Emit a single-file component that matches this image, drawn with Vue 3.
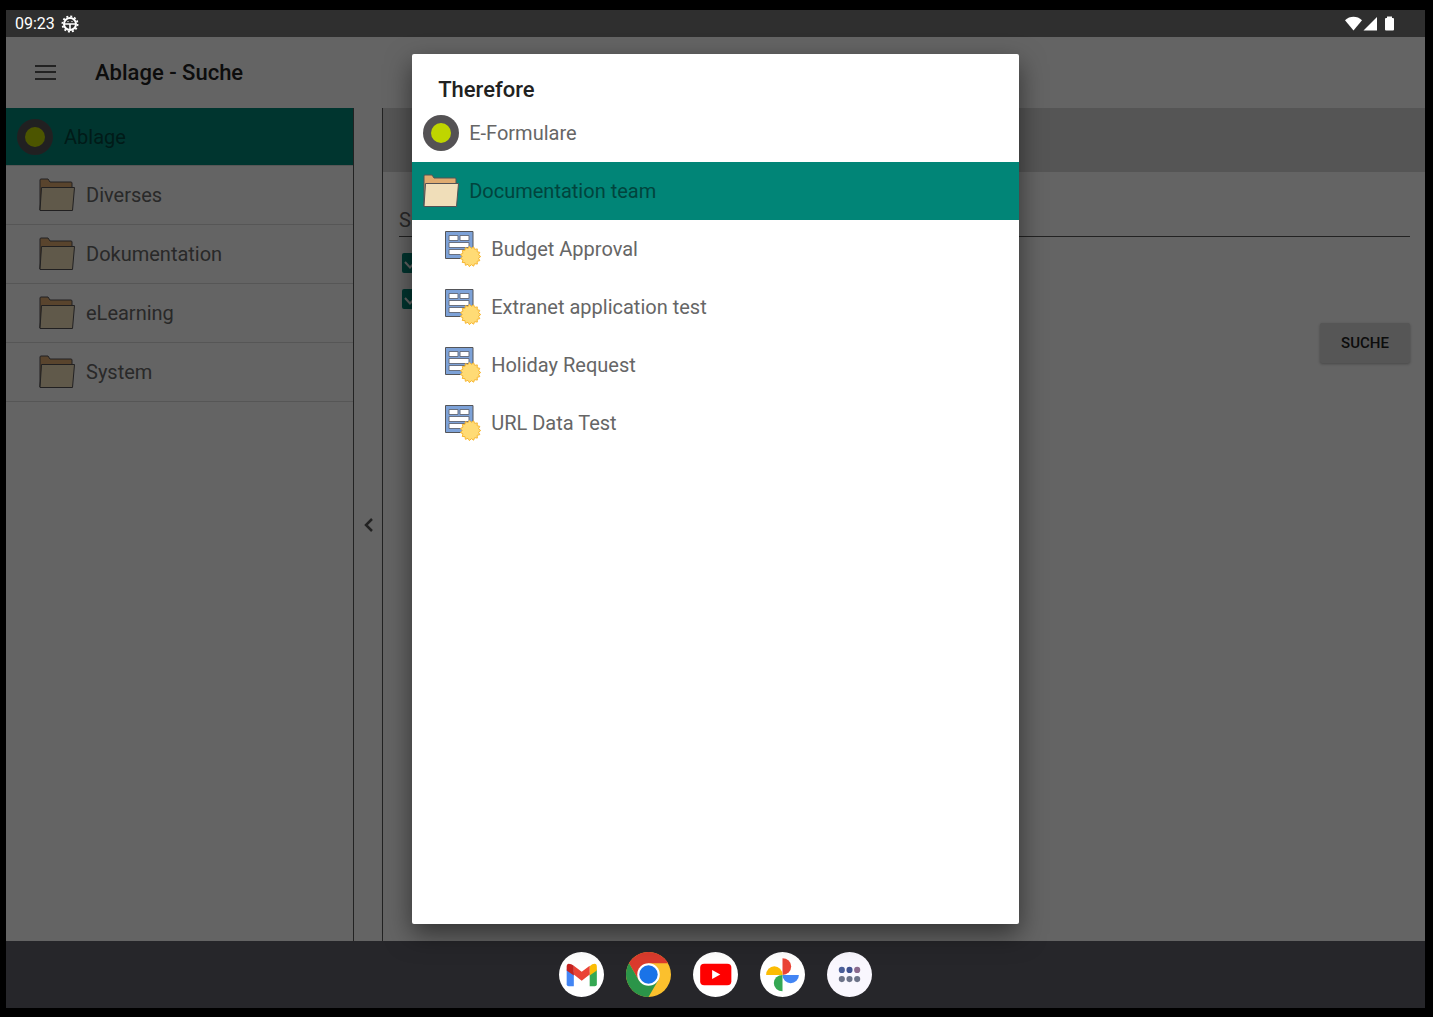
<template>
  <div class="device">
    <header class="status-bar">
      <span class="clock">09:23</span>
      <svg class="debug-icon" viewBox="0 0 18 18" aria-hidden="true">
        <circle cx="9" cy="9" r="7.6" fill="none" stroke="#fff" stroke-width="1.8" stroke-dasharray="2 1.98" />
        <circle cx="9" cy="9" r="6" fill="none" stroke="#fff" stroke-width="2" />
        <path d="M3.5 9h11M9 9v6" fill="none" stroke="#fff" stroke-width="1.6" />
        <path d="M6.4 6.6h1.2M10.4 6.6h1.2" fill="none" stroke="#fff" stroke-width="1" />
      </svg>
      <svg class="signal-icons" viewBox="0 0 50 16" aria-hidden="true">
        <path d="M0 4.2C4.8-.4 12.2-.4 17 4.2L8.5 14.5Z" fill="#fff" />
        <path d="M32 1v13.5H18.5Z" fill="#fff" />
        <path d="M42 .5h5V2h1q1 0 1 1v10.500q0 1-1 1h-7q-1 0-1-1V3q0-1 1-1h1Z" fill="#fff" />
      </svg>
    </header>

    <div class="screen">
      <div class="toolbar">
        <button class="menu-button" type="button" aria-label="Menu">
          <svg viewBox="0 0 22 16"><path d="M0 1h21M0 7h21M0 14h21" stroke="#555" stroke-width="2" /></svg>
        </button>
        <h1>Ablage - Suche</h1>
      </div>

      <div class="panes">
        <nav class="tree">
          <button class="tree-row root" type="button">
            <svg class="root-icon" viewBox="0 0 36 36">
              <circle cx="18" cy="18" r="18" fill="#545254" />
              <circle cx="18" cy="18" r="10" fill="#bfd500" />
            </svg>
            Ablage
          </button>
          <button v-for="folder in folders" :key="folder" class="tree-row" type="button">
            <svg class="folder-icon" viewBox="0 0 36 34">
              <path d="M1 32V2q0-1 1-1h7l2 3h21q1 0 1 1v5H3Z" fill="#dfab70" stroke="#545254" />
              <path d="M2.500 9.500h33L33.500 32.500H1Z" fill="#f0deb9" stroke="#545254" stroke-linejoin="round" />
            </svg>
            {{ folder }}
          </button>
        </nav>

        <button class="collapse" type="button" aria-label="Collapse">
          <svg viewBox="0 0 9 14"><path d="M8 1L2 7l6 6" fill="none" stroke="#555" stroke-width="2.5" /></svg>
        </button>

        <main class="search">
          <div class="search-head"></div>
          <form class="search-form" @submit.prevent>
            <input v-model="query" class="query" type="text" placeholder="Suche" aria-label="Suche">
            <div v-for="(option, i) in options" :key="i" class="option">
              <input v-model="option.checked" type="checkbox" :aria-label="option.label">
              <svg v-if="option.checked" viewBox="0 0 20 20"><path d="M3 9l5 5.5L17 5" fill="none" stroke="#fafafa" stroke-width="2" /></svg>
            </div>
            <button class="submit" type="submit">SUCHE</button>
          </form>
        </main>
      </div>

      <div class="scrim">
        <section class="dialog" role="dialog" aria-labelledby="dialog-title">
          <h2 id="dialog-title">Therefore</h2>
          <button class="dialog-row" type="button">
            <svg class="root-icon" viewBox="0 0 36 36">
              <circle cx="18" cy="18" r="18" fill="#545254" />
              <circle cx="18" cy="18" r="10" fill="#bfd500" />
            </svg>
            E-Formulare
          </button>
          <button class="dialog-row selected" type="button">
            <svg class="folder-icon" viewBox="0 0 36 34">
              <path d="M1 32V2q0-1 1-1h7l2 3h21q1 0 1 1v5H3Z" fill="#dfab70" stroke="#545254" />
              <path d="M2.500 9.500h33L33.500 32.500H1Z" fill="#f0deb9" stroke="#545254" stroke-linejoin="round" />
            </svg>
            Documentation team
          </button>
          <button v-for="form in forms" :key="form" class="dialog-row child" type="button">
            <svg class="form-icon" viewBox="0 0 36 36">
              <path d="M.5 .5h27.500v27H.5Z" fill="#7da2d8" stroke="#545559" />
              <path
                d="M4 4.500h9v5H4ZM15 4.500h9v5h-9ZM4 11.500h20v5H4ZM4 18.500h20v5H4Z"
                fill="#fff"
                stroke="#6a7180"
              />
              <polygon :points="sealPoints" fill="#ffdb75" stroke="#f7b733" />
            </svg>
            {{ form }}
          </button>
        </section>
      </div>
    </div>

    <footer class="dock">
      <button type="button" aria-label="Gmail">
        <svg viewBox="0 0 44 44">
          <circle cx="22" cy="22" r="22" fill="#fff" />
          <path d="M7.5 17v14.500q0 2 2 2h5V20Z" fill="#4285f4" />
          <path d="M37 17v14.500q0 2-2 2h-5V20Z" fill="#34a853" />
          <path d="M30 14l2.500-2q4.500-2 4.500 2.500V18l-7 5Z" fill="#fbbc04" />
          <path d="M14.500 13.500l7.700 5.800 7.800-5.800V22l-7.800 6-7.700-6Z" fill="#ea4335" />
          <path d="M14.500 13.500L12 12q-4.500-2-4.500 2.500V18l7 5Z" fill="#c5221f" />
        </svg>
      </button>
      <button type="button" aria-label="Chrome">
        <svg viewBox="0 0 44 44">
          <circle cx="22" cy="22" r="22" fill="#fbc02d" />
          <path d="M2.950 11A22 22 0 0 1 41.050 11H22L12.500 27.500Z" fill="#db3b2d" />
          <path d="M2.950 11A22 22 0 0 0 22 44l9.500-16.500L12.500 27.500Z" fill="#2b9549" />
          <circle cx="22" cy="22" r="11" fill="#fff" />
          <circle cx="22" cy="22" r="9" fill="#1a73e8" />
        </svg>
      </button>
      <button type="button" aria-label="YouTube">
        <svg viewBox="0 0 44 44">
          <circle cx="22" cy="22" r="22" fill="#fff" />
          <rect x="7" y="11.5" width="30.5" height="21" rx="4" fill="#f00" />
          <path d="M18.700 17.700v8.600l8-4.300Z" fill="#fff" />
        </svg>
      </button>
      <button type="button" aria-label="Photos">
        <svg viewBox="0 0 44 44">
          <circle cx="22" cy="22" r="22" fill="#fff" />
          <path d="M22 6a8.500 8.200 0 0 1 0 16.400Z" fill="#ea4335" />
          <path d="M6 22.400a8 8.500 0 0 1 16 0Z" fill="#fbbc04" />
          <path d="M22 22.400a8 8.200 0 0 0 16 0Z" fill="#4285f4" />
          <path d="M22 22.400a8.500 8 0 0 0 0 16Z" fill="#34a853" />
        </svg>
      </button>
      <button type="button" aria-label="All apps">
        <svg viewBox="0 0 44 44">
          <circle cx="22" cy="22" r="22" fill="#f9f7fe" />
          <circle v-for="dot in appDots" :key="dot.x + '-' + dot.y" :cx="dot.x" :cy="dot.y" r="3" :fill="dot.color" />
        </svg>
      </button>
    </footer>
  </div>
</template>

<script setup>
import { ref } from 'vue'

const query = ref('')
const folders = ['Diverses', 'Dokumentation', 'eLearning', 'System']
const forms = ['Budget Approval', 'Extranet application test', 'Holiday Request', 'URL Data Test']

const options = ref([
  { label: 'Option 1', checked: true },
  { label: 'Option 2', checked: true }
])

const appDots = [
  { x: 14.5, y: 17.5, color: '#4a5e98' },
  { x: 22, y: 17.5, color: '#3f5290' },
  { x: 29.5, y: 17.5, color: '#8b6a8d' },
  { x: 14.5, y: 26.5, color: '#6b7287' },
  { x: 22, y: 26.5, color: '#6b7287' },
  { x: 29.5, y: 26.5, color: '#6b7287' }
]

// jagged seal in the corner of the form icon
const teeth = 15
const sealPoints = Array.from({ length: teeth * 2 }, (_, i) => {
  const radius = i % 2 ? 8.2 : 10.2
  const angle = (Math.PI * i) / teeth
  return `${(25.5 + radius * Math.cos(angle)).toFixed(2)},${(25.5 + radius * Math.sin(angle)).toFixed(2)}`
}).join(' ')
</script>

<style>
body {
  margin: 0;
  background: #000;
}
</style>

<style scoped>
.device {
  box-sizing: border-box;
  min-height: 100vh;
  padding: 10px 8px 9px 6px;
  display: flex;
  flex-direction: column;
  background: #000;
  font-family: Roboto, sans-serif;
}

button {
  border: 0;
  padding: 0;
  background: none;
  font: inherit;
  color: inherit;
  cursor: pointer;
}

svg {
  display: block;
  flex-shrink: 0;
}

.status-bar {
  height: 27px;
  padding: 0 30px 0 9px;
  display: flex;
  align-items: center;
  background: #2f2f2f;
  color: #fff;
  font-size: 16px;
}

.debug-icon {
  width: 18px;
  height: 18px;
  margin-left: 6px;
}

.signal-icons {
  width: 50px;
  height: 16px;
  margin-left: auto;
}

.screen {
  position: relative;
  flex: 1;
  display: flex;
  flex-direction: column;
  background: #fafafa;
}

.toolbar {
  height: 71px;
  padding-left: 29px;
  display: flex;
  align-items: center;
  gap: 38px;
}

.menu-button svg {
  width: 22px;
  height: 16px;
}

h1,
h2 {
  margin: 0;
  font-size: 22px;
  font-weight: 500;
  color: #212121;
}

.panes {
  flex: 1;
  display: flex;
}

.tree {
  box-sizing: border-box;
  width: 348px;
  border-right: 1px solid #555;
}

.tree-row,
.dialog-row {
  box-sizing: border-box;
  width: 100%;
  height: 59px;
  padding-left: 33px;
  display: flex;
  align-items: center;
  gap: 11px;
  border-bottom: 1px solid #d6d6d6;
  color: #666;
  font-size: 20px;
  text-align: left;
}

.tree-row.root {
  height: 58px;
  padding-left: 11px;
  background: #018577;
  color: #01443d;
}

.root-icon,
.form-icon {
  width: 36px;
  height: 36px;
}

.folder-icon {
  width: 36px;
  height: 34px;
}

.collapse {
  width: 28px;
  display: flex;
  align-items: center;
  justify-content: center;
}

.collapse svg {
  width: 9px;
  height: 14px;
}

.search {
  flex: 1;
  border-left: 1px solid #555;
}

.search-head {
  height: 64px;
  background: #d4d4d4;
}

.search-form {
  padding: 32px 15px 0 16px;
  display: flex;
  flex-direction: column;
}

.query {
  box-sizing: border-box;
  width: 100%;
  height: 33px;
  margin-bottom: 8px;
  padding: 0;
  border: 0;
  border-bottom: 1px solid #555;
  background: none;
  font: inherit;
  font-size: 20px;
}

.query::placeholder {
  color: #666;
}

.option {
  height: 36px;
  padding-left: 3px;
  display: grid;
  align-items: center;
}

.option input,
.option svg {
  grid-area: 1 / 1;
  width: 20px;
  height: 20px;
  margin: 0;
}

.option input {
  appearance: none;
  border-radius: 2px;
  background: #018577;
}

.option svg {
  pointer-events: none;
}

.submit {
  align-self: flex-end;
  width: 90px;
  height: 40px;
  margin-top: 6px;
  border-radius: 2px;
  background: #d6d6d6;
  box-shadow: 0 1px 3px rgba(0, 0, 0, 0.3);
  color: #212121;
  font-size: 15px;
  font-weight: 500;
}

.scrim {
  position: absolute;
  inset: 0;
  padding: 17px;
  display: flex;
  justify-content: center;
  background: rgba(0, 0, 0, 0.6);
}

.dialog {
  width: 43.8%;
  border-radius: 2px;
  background: #fff;
  box-shadow: 0 10px 26px rgba(0, 0, 0, 0.5);
}

.dialog h2 {
  padding: 22px 26px 0;
  line-height: 28px;
}

.dialog-row {
  height: 58px;
  padding-left: 11px;
  gap: 10px;
  border-bottom: 0;
}

.dialog-row.selected {
  background: #018577;
  color: #01443d;
}

.dialog-row.child {
  padding-left: 33px;
}

.dock {
  height: 67px;
  display: flex;
  align-items: center;
  justify-content: center;
  gap: 22px;
  background: #26262a;
}

.dock svg {
  width: 45px;
  height: 45px;
}
</style>
